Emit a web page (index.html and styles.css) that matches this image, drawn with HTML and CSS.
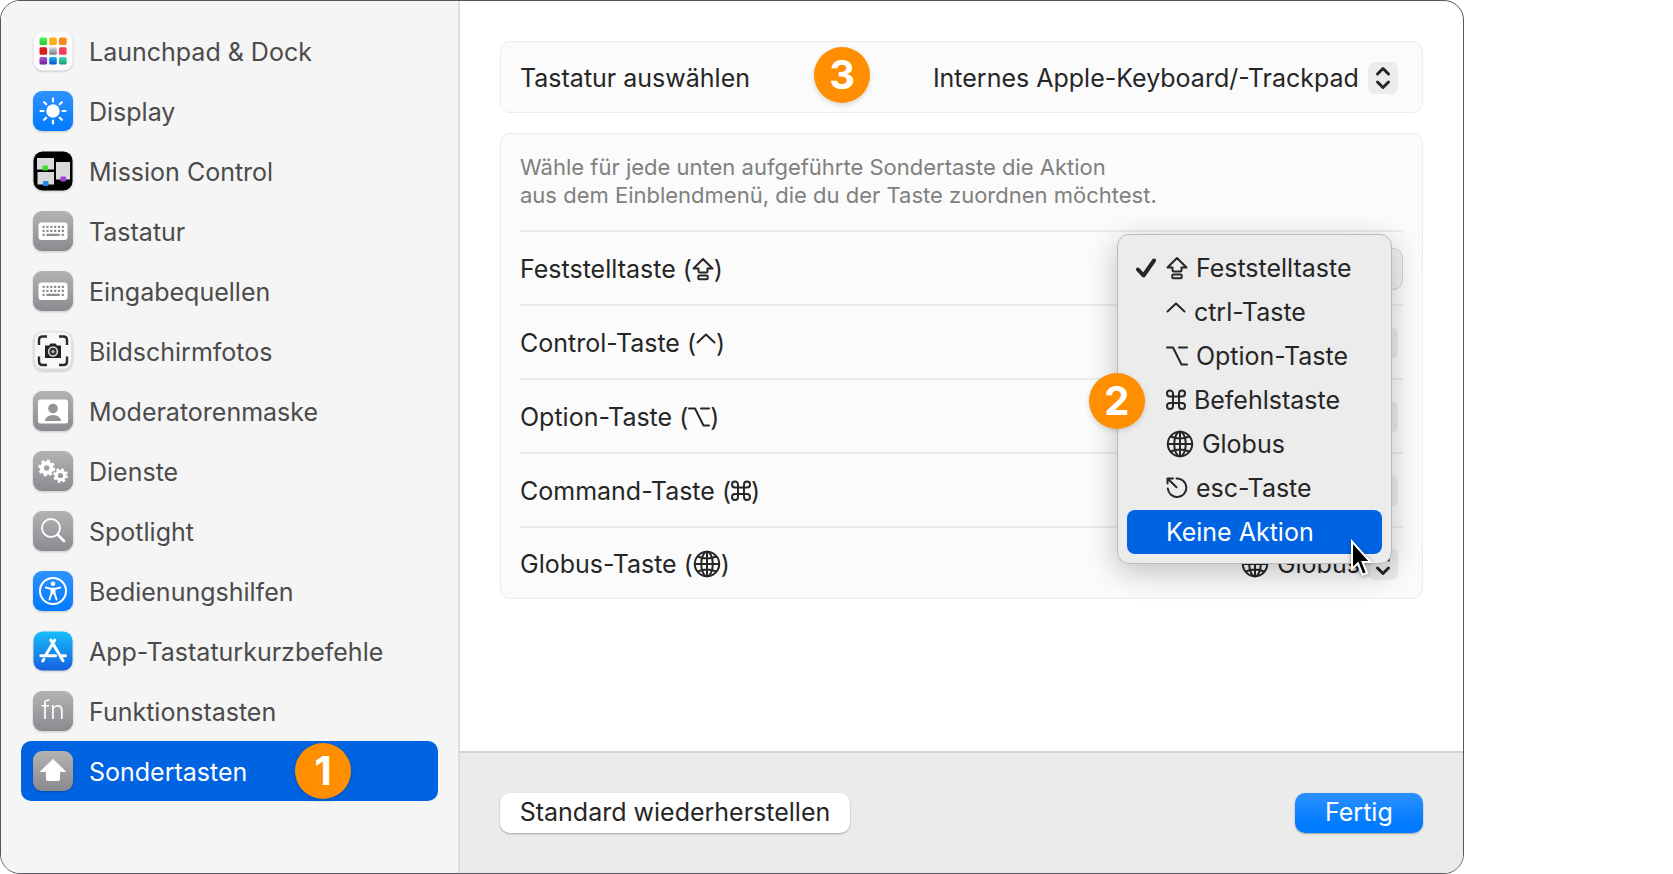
FILE: index.html
```
<!DOCTYPE html>
<html lang="de">
<head>
<meta charset="utf-8">
<meta name="viewport" content="width=device-width, initial-scale=1">
<title>Tastaturkurzbefehle</title>
<link rel="stylesheet" href="styles.css">
</head>
<body>
<svg class="sprite" width="0" height="0" aria-hidden="true">
  <defs>
    <linearGradient id="gray" x1="0" y1="0" x2="0" y2="1"><stop offset="0" stop-color="#b3b3b5"/><stop offset="1" stop-color="#8b8a8f"/></linearGradient>
    <linearGradient id="blue" x1="0" y1="0" x2="0" y2="1"><stop offset="0" stop-color="#2f92ff"/><stop offset="1" stop-color="#007aff"/></linearGradient>
    <linearGradient id="store" x1="0" y1="0" x2="0" y2="1"><stop offset="0" stop-color="#17bffb"/><stop offset="1" stop-color="#1560e0"/></linearGradient>
    <linearGradient id="green" x1="0" y1="0" x2="0" y2="1"><stop offset="0" stop-color="#5cf15a"/><stop offset="1" stop-color="#25c72c"/></linearGradient>
    <linearGradient id="silver" x1="0" y1="0" x2="0" y2="1"><stop offset="0" stop-color="#d6d9de"/><stop offset="1" stop-color="#77797c"/></linearGradient>
    <linearGradient id="azure" x1="0" y1="0" x2="0" y2="1"><stop offset="0" stop-color="#13b5f5"/><stop offset="1" stop-color="#0a4dc9"/></linearGradient>
    <linearGradient id="teal" x1="0" y1="0" x2="0" y2="1"><stop offset="0" stop-color="#48d6b4"/><stop offset="1" stop-color="#159c78"/></linearGradient>
    <linearGradient id="violet" x1="0" y1="0" x2="0" y2="1"><stop offset="0" stop-color="#a85bd6"/><stop offset="1" stop-color="#6b1fa0"/></linearGradient>
  </defs>
  <symbol id="keyboard" viewBox="0 0 40 40">
    <rect x="5.5" y="11.5" width="29" height="17.5" rx="3" fill="#fff"/>
    <g stroke="#8f8f93" stroke-width="2.2" fill="none">
      <path d="M9.5 15.8H31M9.5 19.8H31" stroke-dasharray="2.2 1.65"/>
      <path d="M9.5 23.8h2.2M13.4 23.8h13.4M28.7 23.8h2.2"/>
    </g>
  </symbol>
  <symbol id="capslock" viewBox="0 0 22 24">
    <path d="M11 2 20.5 11.5H15.5V14.2Q15.5 15.5 14.2 15.5H7.8Q6.5 15.5 6.5 14.2V11.5H1.5Z"/>
    <rect x="6.3" y="18.6" width="9.4" height="3.7" rx="1"/>
  </symbol>
  <symbol id="caret" viewBox="0 0 20 24"><path d="M1.5 11.5 10 3.5 18.5 11.5"/></symbol>
  <symbol id="option" viewBox="0 0 22 24"><path d="M1 3.5H7L15.5 20.5H21M13 3.5H21"/></symbol>
  <symbol id="command" viewBox="0 0 20 24">
    <path d="M7 8.800V5.500A3 3 0 1 0 4 8.500H16A3 3 0 1 0 13 5.500V18A3 3 0 1 0 16 15H4A3 3 0 1 0 7 18Z"/>
  </symbol>
  <symbol id="globe" viewBox="0 0 28 28">
    <circle cx="14" cy="14" r="12.2"/>
    <ellipse cx="14" cy="14" rx="5.800" ry="12.2"/>
    <path d="M14 1.800V26.200M1.800 14H26.200M4.800 6.500Q14 10.500 23.200 6.500M4.800 21.500Q14 17.500 23.200 21.500"/>
  </symbol>
  <symbol id="escape" viewBox="0 0 22 24">
    <path d="M10.500 2.500A9.300 9.300 0 1 1 1.800 12.500M1.500 7.500V2.500H7M2 3 10.500 11.200"/>
  </symbol>
  <symbol id="updown" viewBox="0 0 30 32"><path d="M9.500 12 15 6.500 20.500 12M9.500 20 15 25.500 20.500 20"/></symbol>
</svg>

<div class="window">
  <nav class="sidebar" aria-label="Kategorien">
    <a class="item" href="#launchpad">
      <svg class="tile" viewBox="0 0 40 40" aria-hidden="true">
        <rect x=".5" y=".5" width="39" height="39" rx="9" fill="#fbfbfb"/>
        <rect x="6.500" y="6.500" width="7.600" height="7.600" rx="1.500" fill="url(#green)"/><rect x="16.200" y="6.500" width="7.600" height="7.600" rx="1.500" fill="#fbae17"/><rect x="26" y="6.500" width="7.600" height="7.600" rx="1.500" fill="#f58a1a"/>
        <rect x="6.500" y="16.200" width="7.600" height="7.600" rx="1.500" fill="#e01b1b"/><rect x="16.200" y="16.200" width="7.600" height="7.600" rx="1.500" fill="url(#silver)"/><rect x="26" y="16.200" width="7.600" height="7.600" rx="1.500" fill="#fb3b58"/>
        <rect x="6.500" y="26" width="7.600" height="7.600" rx="1.500" fill="url(#violet)"/><rect x="16.200" y="26" width="7.600" height="7.600" rx="1.500" fill="url(#azure)"/><rect x="26" y="26" width="7.600" height="7.600" rx="1.500" fill="url(#teal)"/>
      </svg>
      <span class="item-name">Launchpad &amp; Dock</span>
    </a>
    <a class="item" href="#display">
      <svg class="tile" viewBox="0 0 40 40" aria-hidden="true">
        <rect width="40" height="40" rx="9" fill="url(#blue)"/>
        <circle cx="20" cy="20" r="6.700" fill="#fff"/>
        <path d="M20 7.500v3M20 29.500v3M7.500 20h3M29.500 20h3M11.200 11.200l2 2M26.800 26.800l2 2M11.200 28.800l2-2M26.800 13.200l2-2" stroke="#fff" stroke-width="2.200" stroke-linecap="round"/>
      </svg>
      <span class="item-name">Display</span>
    </a>
    <a class="item" href="#mission-control">
      <svg class="tile" viewBox="0 0 40 40" aria-hidden="true">
        <rect x=".5" y=".5" width="39" height="39" rx="9" fill="#000"/>
        <path d="M4 7H21V18.500H4ZM4.500 21H21V33.500H4.500ZM23 11H37V28.500H23Z" fill="#d9d9d9"/>
        <rect x="9.500" y="14.500" width="5.500" height="5" rx="1" fill="#36df35"/><rect x="10" y="30" width="5.500" height="5" rx="1" fill="#1c8df0"/><rect x="27.500" y="25.500" width="5.500" height="5" rx="1" fill="#a040d8"/>
      </svg>
      <span class="item-name">Mission Control</span>
    </a>
    <a class="item" href="#tastatur">
      <svg class="tile" viewBox="0 0 40 40" aria-hidden="true"><rect width="40" height="40" rx="9" fill="url(#gray)"/><use href="#keyboard"/></svg>
      <span class="item-name">Tastatur</span>
    </a>
    <a class="item" href="#eingabequellen">
      <svg class="tile" viewBox="0 0 40 40" aria-hidden="true"><rect width="40" height="40" rx="9" fill="url(#gray)"/><use href="#keyboard"/></svg>
      <span class="item-name">Eingabequellen</span>
    </a>
    <a class="item" href="#bildschirmfotos">
      <svg class="tile" viewBox="0 0 40 40" aria-hidden="true">
        <rect x=".5" y=".5" width="39" height="39" rx="9" fill="#dfdfdf"/><rect x="2" y="1.500" width="36" height="36" rx="8" fill="#f8f8f8"/>
        <path d="M6 14V9Q6 5.500 9.500 5.500H14M26 5.500H30.500Q34 5.500 34 9V14M34 25.500V30.500Q34 34 30.500 34H26M14 34H9.500Q6 34 6 30.500V25.500" fill="none" stroke="#2a2a2a" stroke-width="2.400"/>
        <path d="M12 14.500h4l1.500-2h5l1.500 2h4v12.500H12Z" fill="#222"/>
        <circle cx="20" cy="20.500" r="4.400" fill="#333" stroke="#ddd" stroke-width="1.500"/><circle cx="20" cy="20.500" r="1.600" fill="#bbb"/>
      </svg>
      <span class="item-name">Bildschirmfotos</span>
    </a>
    <a class="item" href="#moderatorenmaske">
      <svg class="tile" viewBox="0 0 40 40" aria-hidden="true">
        <rect width="40" height="40" rx="9" fill="url(#gray)"/>
        <rect x="5" y="8.500" width="30" height="24" rx="2.500" fill="#fff"/>
        <circle cx="20" cy="17.500" r="4.800" fill="#949498"/><path d="M11.500 30Q13.500 24 20 24T28.500 30Z" fill="#949498"/>
      </svg>
      <span class="item-name">Moderatorenmaske</span>
    </a>
    <a class="item" href="#dienste">
      <svg class="tile" viewBox="0 0 40 40" aria-hidden="true">
        <rect width="40" height="40" rx="9" fill="url(#gray)"/>
        <g fill="none" stroke="#fff">
          <circle cx="13.700" cy="17" r="4.800" stroke-width="4"/><circle cx="13.700" cy="17" r="7.200" stroke-width="2.600" stroke-dasharray="3 2.655"/>
          <circle cx="27.500" cy="24.500" r="4.200" stroke-width="3.200"/><circle cx="27.500" cy="24.500" r="6.200" stroke-width="2.400" stroke-dasharray="2.600 2.269"/>
        </g>
      </svg>
      <span class="item-name">Dienste</span>
    </a>
    <a class="item" href="#spotlight">
      <svg class="tile" viewBox="0 0 40 40" aria-hidden="true">
        <rect width="40" height="40" rx="9" fill="url(#gray)"/>
        <circle cx="18" cy="17" r="9" fill="none" stroke="#fff" stroke-width="1.800"/><path d="M24.500 23.500 31 30" stroke="#fff" stroke-width="2.600" stroke-linecap="round"/>
      </svg>
      <span class="item-name">Spotlight</span>
    </a>
    <a class="item" href="#bedienungshilfen">
      <svg class="tile" viewBox="0 0 40 40" aria-hidden="true">
        <rect width="40" height="40" rx="9" fill="url(#blue)"/>
        <circle cx="20" cy="20" r="13" fill="none" stroke="#fff" stroke-width="2"/>
        <circle cx="20" cy="12.800" r="2.200" fill="#fff"/>
        <path d="M12.800 16.500 18 17.800H22L27.200 16.500M20 18V22.500M18.500 18V22L16.500 28.500M21.500 18V22L23.500 28.500" fill="none" stroke="#fff" stroke-width="1.900" stroke-linecap="round" stroke-linejoin="round"/>
      </svg>
      <span class="item-name">Bedienungshilfen</span>
    </a>
    <a class="item" href="#app-tastaturkurzbefehle">
      <svg class="tile" viewBox="0 0 40 40" aria-hidden="true">
        <rect x=".5" y=".5" width="39" height="39" rx="9" fill="url(#store)"/>
        <path d="M21.800 9 12.500 24.500M10.800 28.300 9.800 30M7.800 24.800H22.500M28 24.800H32.500M17.800 9 30 29.800" fill="none" stroke="#fff" stroke-width="3" stroke-linecap="round"/>
      </svg>
      <span class="item-name">App-Tastaturkurzbefehle</span>
    </a>
    <a class="item" href="#funktionstasten">
      <span class="tile tile-fn" aria-hidden="true">fn</span>
      <span class="item-name">Funktionstasten</span>
    </a>
    <a class="item item-selected" href="#sondertasten" aria-current="page">
      <svg class="tile" viewBox="0 0 40 40" aria-hidden="true">
        <rect width="40" height="40" rx="9" fill="url(#gray)"/>
        <path d="M20 8.500 32.500 20.500H26.500V28.500Q26.500 29.500 25.500 29.500H14.500Q13.500 29.500 13.500 28.500V20.500H7.500Z" fill="#fff" stroke="#fff" stroke-width="1" stroke-linejoin="round"/>
      </svg>
      <span class="item-name">Sondertasten</span>
      <span class="badge badge-sidebar">1</span>
    </a>
  </nav>

  <main class="main">
    <div class="content">
      <section class="card card-keyboard">
        <label for="keyboard-select">Tastatur auswählen</label>
        <span class="badge badge-keyboard">3</span>
        <div class="popup">
          <select id="keyboard-select"><option>Internes Apple-Keyboard/-Trackpad</option></select>
          <svg class="stepper" aria-hidden="true"><use href="#updown"/></svg>
        </div>
      </section>

      <section class="card">
        <p class="hint">Wähle für jede unten aufgeführte Sondertaste die Aktion<br>aus dem Einblendmenü, die du der Taste zuordnen möchtest.</p>

        <div class="row">
          <span class="label" id="caps-label">Feststelltaste (<svg class="key key-22" aria-hidden="true"><use href="#capslock"/></svg>)</span>
          <button class="open-button" type="button" aria-haspopup="menu" aria-expanded="true" aria-labelledby="caps-label"></button>
          <div class="menu" role="menu" aria-labelledby="caps-label">
            <button class="choice" type="button" role="menuitem"><span class="mark"><svg class="check" viewBox="0 0 20 20" aria-hidden="true"><path d="M2 11.500 7.500 17.500 18 2.500"/></svg></span><svg class="key key-22" aria-hidden="true"><use href="#capslock"/></svg>Feststelltaste</button>
            <button class="choice" type="button" role="menuitem"><span class="mark"></span><svg class="key key-20" aria-hidden="true"><use href="#caret"/></svg>ctrl-Taste</button>
            <button class="choice" type="button" role="menuitem"><span class="mark"></span><svg class="key key-22" aria-hidden="true"><use href="#option"/></svg>Option-Taste</button>
            <button class="choice" type="button" role="menuitem"><span class="mark"></span><svg class="key key-20" aria-hidden="true"><use href="#command"/></svg>Befehlstaste</button>
            <button class="choice" type="button" role="menuitem"><span class="mark"></span><svg class="key key-globe" aria-hidden="true"><use href="#globe"/></svg>Globus</button>
            <button class="choice" type="button" role="menuitem"><span class="mark"></span><svg class="key key-22" aria-hidden="true"><use href="#escape"/></svg>esc-Taste</button>
            <button class="choice choice-active" type="button" role="menuitem"><span class="mark"></span>Keine Aktion</button>
            <span class="badge badge-menu">2</span>
            <svg class="pointer" viewBox="0 0 22 40" aria-hidden="true"><path d="M2 2.500V30L8 24.300 12.500 35.800 17 34 12.500 23H20.500Z"/></svg>
          </div>
        </div>
        <div class="row">
          <label class="label" for="control-select">Control-Taste (<svg class="key key-20" aria-hidden="true"><use href="#caret"/></svg>)</label>
          <div class="popup">
            <select id="control-select"><option>ctrl-Taste</option></select>
            <svg class="stepper" aria-hidden="true"><use href="#updown"/></svg>
          </div>
        </div>
        <div class="row">
          <label class="label" for="option-select">Option-Taste (<svg class="key key-22" aria-hidden="true"><use href="#option"/></svg>)</label>
          <div class="popup">
            <select id="option-select"><option>Option-Taste</option></select>
            <svg class="stepper" aria-hidden="true"><use href="#updown"/></svg>
          </div>
        </div>
        <div class="row">
          <label class="label" for="command-select">Command-Taste (<svg class="key key-20" aria-hidden="true"><use href="#command"/></svg>)</label>
          <div class="popup">
            <select id="command-select"><option>Befehlstaste</option></select>
            <svg class="stepper" aria-hidden="true"><use href="#updown"/></svg>
          </div>
        </div>
        <div class="row">
          <label class="label" for="globe-select">Globus-Taste (<svg class="key key-globe" aria-hidden="true"><use href="#globe"/></svg>)</label>
          <div class="popup">
            <svg class="key key-globe" aria-hidden="true"><use href="#globe"/></svg>
            <select id="globe-select"><option>Globus</option></select>
            <svg class="stepper" aria-hidden="true"><use href="#updown"/></svg>
          </div>
        </div>
      </section>
    </div>

    <footer class="footer">
      <button class="button button-default" type="button">Standard wiederherstellen</button>
      <button class="button button-primary" type="button">Fertig</button>
    </footer>
  </main>
</div>
</body>
</html>
```
FILE: styles.css
```
* { box-sizing: border-box; }

body {
  margin: 0;
  background: #fff;
  color: #262626;
  font-family: Inter, "Liberation Sans", sans-serif;
  font-size: 25px;
  line-height: 32px;
}

button, select {
  margin: 0;
  font: inherit;
  color: inherit;
}

.sprite { position: absolute; }

.window {
  display: flex;
  width: 87.5%;
  min-height: 100vh;
  border: 1px solid #58555a;
  border-radius: 20px;
  overflow: hidden;
}

/* Sidebar */
.sidebar {
  flex: 0 0 459px;
  padding: 20px;
  background: #f5f5f5;
  border-right: 2px solid #dedede;
}

.item {
  position: relative;
  display: flex;
  align-items: center;
  gap: 16px;
  height: 60px;
  padding-left: 12px;
  border-radius: 10px;
  color: #4b4b4b;
  text-decoration: none;
  white-space: nowrap;
}

.item-name { padding-top: 2px; }

.item-selected {
  background: #0063e1;
  color: #fff;
}

.tile {
  flex: none;
  width: 40px;
  height: 40px;
  filter: drop-shadow(0 1px 1px rgba(0, 0, 0, .2));
}

.tile-fn {
  border-radius: 9px;
  background: linear-gradient(#b3b3b5, #8b8a8f);
  color: #fff;
  font-weight: 300;
  line-height: 38px;
  text-align: center;
}

/* Numbered markers */
.badge {
  position: absolute;
  z-index: 3;
  width: 56px;
  height: 56px;
  border-radius: 50%;
  background: #ff8f00;
  box-shadow: 0 2px 5px rgba(0, 0, 0, .15);
  color: #fff;
  font-size: 40px;
  font-weight: 700;
  line-height: 55px;
  text-align: center;
}

.badge-sidebar { top: 2px; left: 274px; }
.badge-keyboard { top: 5px; left: 34%; }
.badge-menu { top: 138px; left: -29px; }

/* Main area */
.main {
  display: flex;
  flex: 1;
  flex-direction: column;
  min-width: 0;
}

.content {
  display: flex;
  flex: 1;
  flex-direction: column;
  gap: 20px;
  padding: 40px 40px 60px;
}

.card {
  position: relative;
  padding: 0 19px;
  border: 1px solid #ececec;
  border-radius: 10px;
  background: #fbfbfb;
}

.card-keyboard {
  display: flex;
  align-items: center;
  justify-content: space-between;
  height: 72px;
  padding-top: 2px;
}

.hint {
  margin: 0;
  padding: 19px 0 21px;
  color: #808080;
  font-size: 22px;
  line-height: 28px;
}

.row {
  position: relative;
  display: flex;
  align-items: center;
  justify-content: space-between;
  height: 74px;
  padding-top: 2px;
  border-top: 2px solid #ececec;
}

.row:last-child { height: 72px; }

.label {
  display: flex;
  align-items: center;
  white-space: pre;
}

.popup {
  display: flex;
  align-items: center;
  gap: 8px;
  padding-right: 5px;
}

.popup select {
  padding: 0;
  border: 0;
  appearance: none;
  background: transparent;
}

.stepper {
  flex: none;
  width: 30px;
  height: 32px;
  border-radius: 7px;
  background: #ececec;
  fill: none;
  stroke: #262626;
  stroke-width: 3;
  stroke-linecap: round;
  stroke-linejoin: round;
}

.open-button {
  width: 260px;
  height: 42px;
  border: 1px solid #d0d0d0;
  border-radius: 10px;
  background: #f1f1f1;
}

/* Key symbols */
.key {
  flex: none;
  height: 24px;
  fill: none;
  stroke: currentColor;
  stroke-width: 2;
  stroke-linecap: round;
  stroke-linejoin: round;
}

.key-20 { width: 20px; }
.key-22 { width: 22px; }

.key-globe {
  width: 28px;
  height: 28px;
}

/* Open menu */
.menu {
  position: absolute;
  z-index: 2;
  top: 2px;
  right: 11px;
  width: 275px;
  padding: 11px 9px 9px;
  border: 1px solid #b9b9b9;
  border-radius: 12px;
  background: #ececec;
  box-shadow: 0 8px 30px rgba(0, 0, 0, .24);
}

.choice {
  display: flex;
  align-items: center;
  width: 100%;
  height: 44px;
  padding: 0;
  border: 0;
  border-radius: 8px;
  background: transparent;
  text-align: left;
  white-space: nowrap;
}

.choice .key { margin-right: 8px; }

.choice-active {
  background: #0063e1;
  color: #fff;
}

.mark {
  flex: 0 0 39px;
  display: flex;
  justify-content: center;
}

.check {
  width: 20px;
  height: 20px;
  fill: none;
  stroke: currentColor;
  stroke-width: 4;
  stroke-linecap: round;
  stroke-linejoin: round;
}

.pointer {
  position: absolute;
  right: 19px;
  bottom: -16px;
  width: 22px;
  height: 40px;
  fill: #000;
  stroke: #fff;
  stroke-width: 2;
  filter: drop-shadow(0 1px 2px rgba(0, 0, 0, .4));
}

/* Footer */
.footer {
  display: flex;
  align-items: center;
  justify-content: space-between;
  height: 122px;
  padding: 0 40px;
  border-top: 2px solid #d3d3d3;
  background: #ebebeb;
}

.button {
  height: 40px;
  padding: 0 16px 2px;
  border: 0;
  border-radius: 10px;
  background: #fff;
  box-shadow: 0 1px 2px rgba(0, 0, 0, .3);
}

.button-default { min-width: 350px; }

.button-primary {
  width: 128px;
  background: linear-gradient(#2b90ff, #007aff 80%);
  color: #fff;
}
```
